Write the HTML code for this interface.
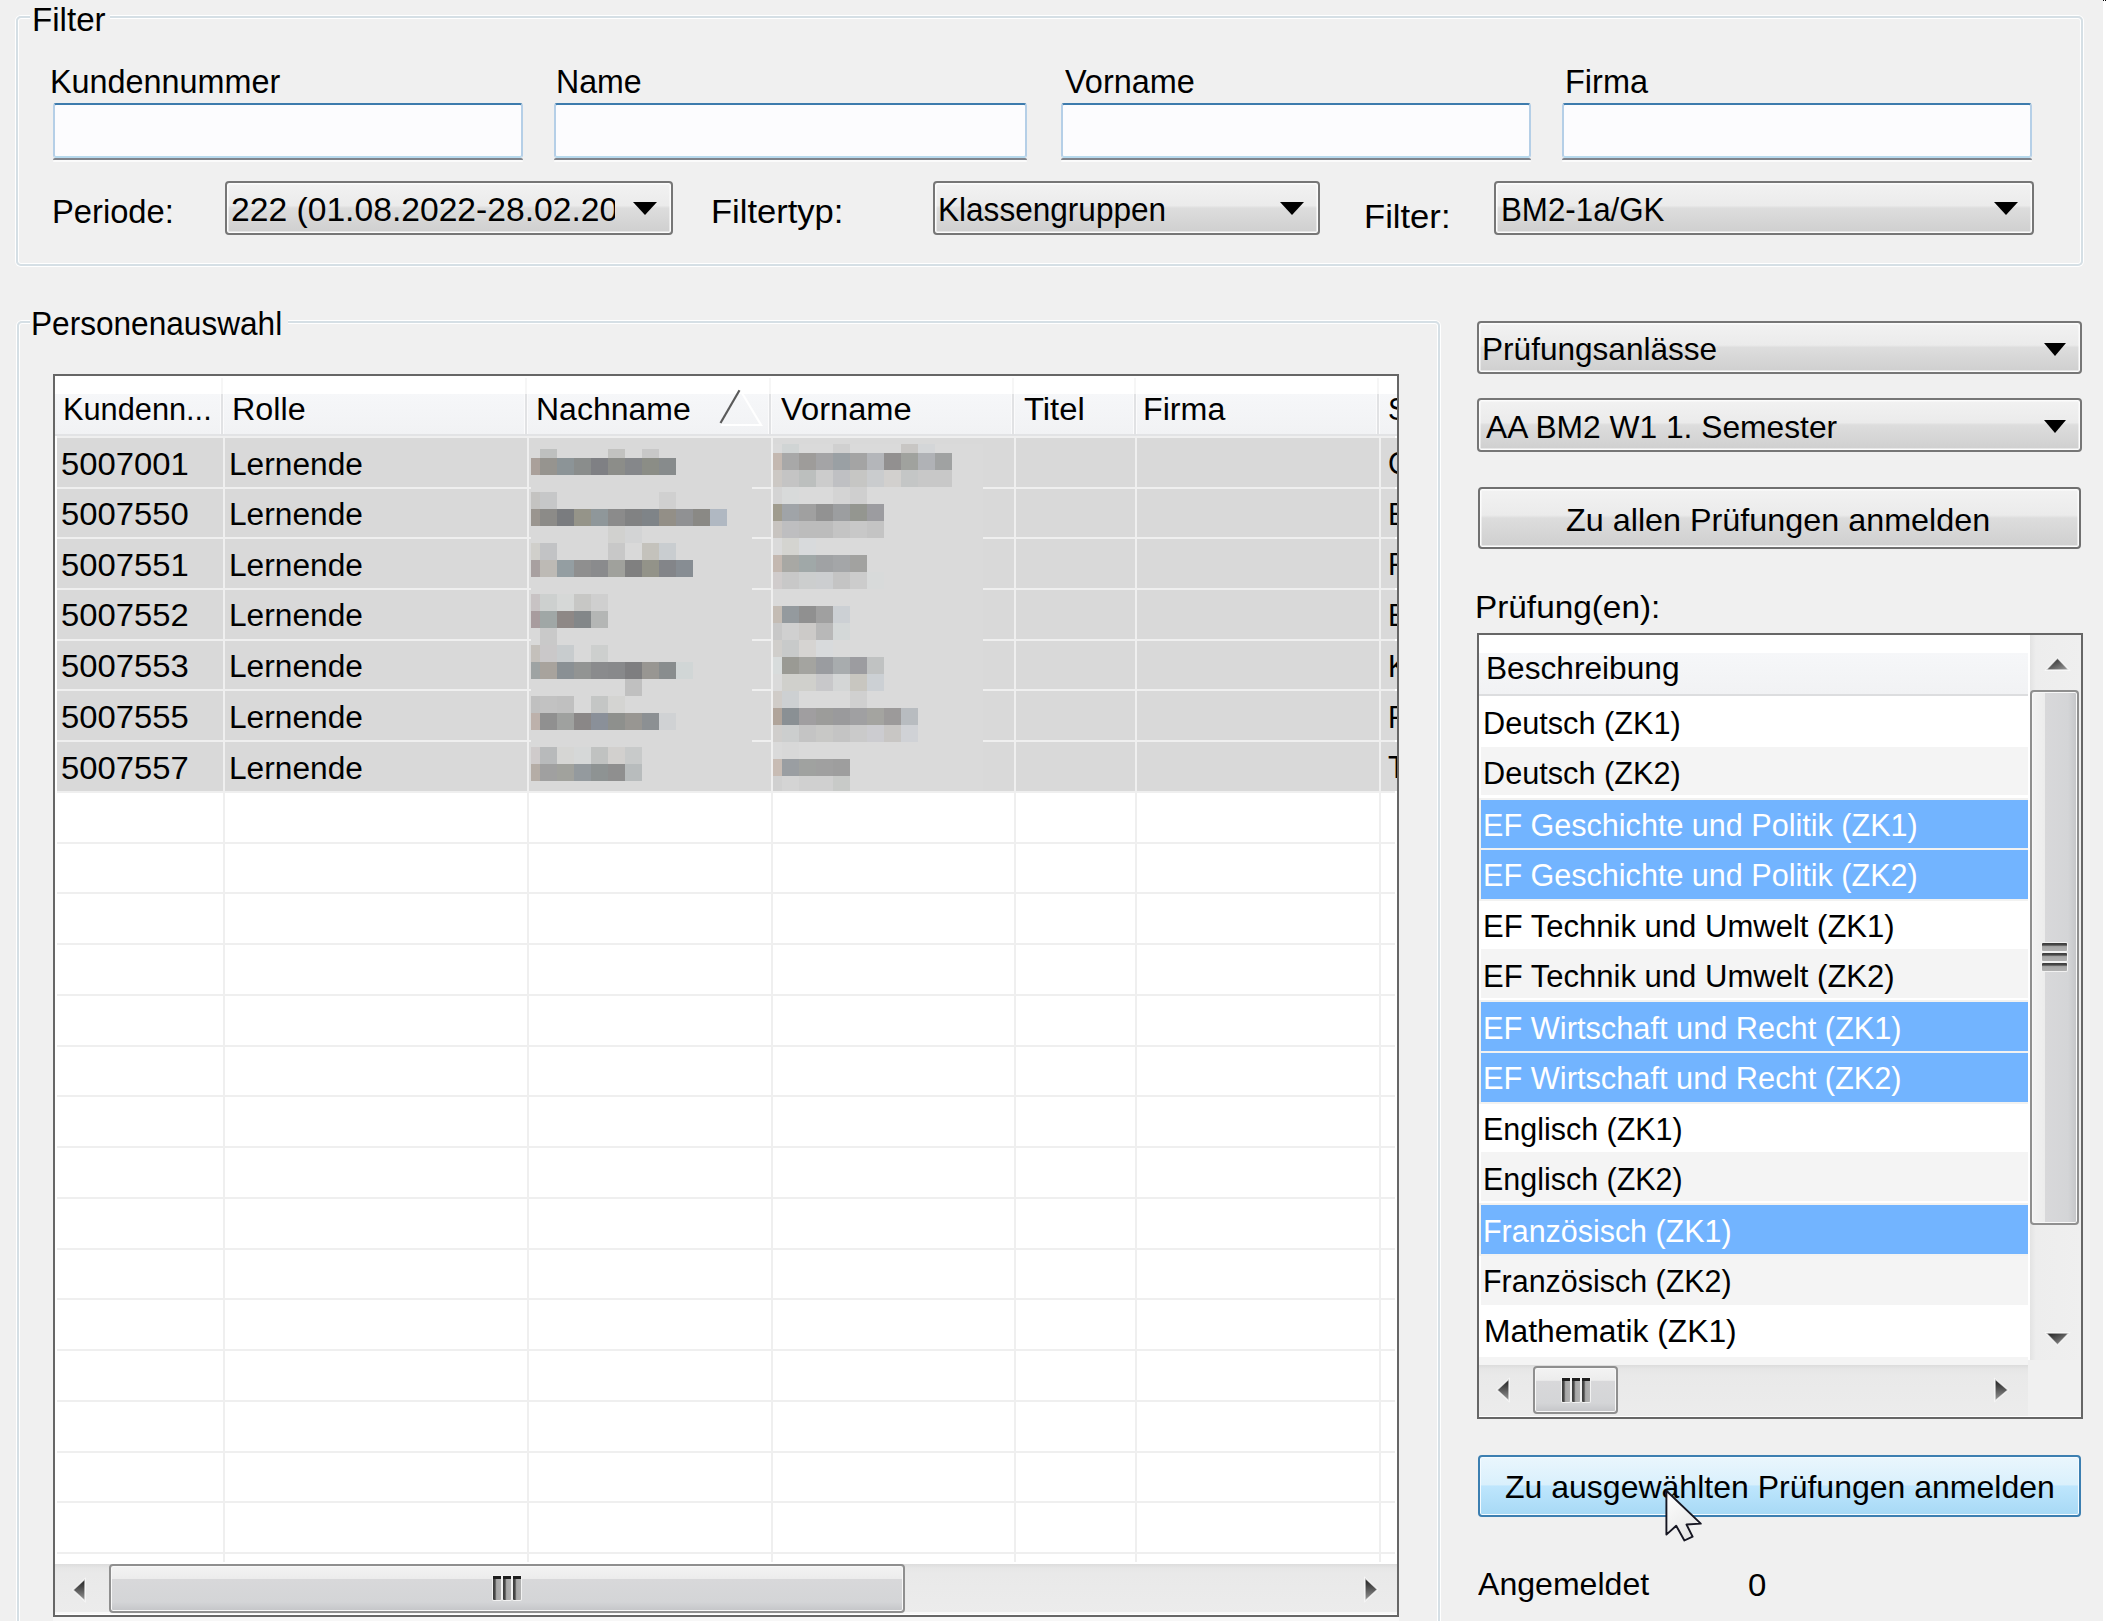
<!DOCTYPE html>
<html><head><meta charset="utf-8"><style>
html,body{margin:0;padding:0}
body{width:2106px;height:1621px;overflow:hidden;position:relative;background:#f0f0f0;font-family:"Liberation Sans",sans-serif;color:#000}
.a{position:absolute;box-sizing:border-box}
.t{position:absolute;white-space:nowrap;transform-origin:0 0}
.gb{position:absolute;box-sizing:border-box;border:2px solid #d5dfe5;border-radius:5px;box-shadow:inset 0 0 0 1px #fff, 0 0 0 1px #fff}
.tb{position:absolute;box-sizing:border-box;border:2px solid #abadb3;border-top-color:#3d7bad;border-left-color:#b5cfe7;border-right-color:#b5cfe7;border-bottom-color:#b7d9ed;background:#fcfcfe;border-radius:3px}
.tbb{position:absolute;height:2px;background:#80848c;border-radius:2px 2px 0 0;box-shadow:0 2px 0 #fbfbfb}
.cb{position:absolute;box-sizing:border-box;border:2px solid #767676;border-radius:4px;background:linear-gradient(#f2f2f2 0%,#ebebeb 45%,#dddddd 50%,#cfcfcf 100%);box-shadow:inset 0 0 0 1.5px #fcfcfc}
.arr{position:absolute;width:0;height:0;border-left:12px solid transparent;border-right:12px solid transparent;border-top:13px solid #000}
</style></head><body>
<div class="a" style="left:2103px;top:0;width:3px;height:1621px;background:#fff"></div>
<div class="a" style="left:2103px;top:0;width:1.3px;height:1.2px;background:#000"></div>
<div class="a" style="left:2105px;top:0;width:1px;height:1.2px;background:#000"></div>
<div class="gb" style="left:16px;top:16px;width:2067px;height:250px"></div>
<div class="a" style="left:30px;top:8px;width:80px;height:20px;background:#f0f0f0"></div>
<div class="t" style="left:32.15px;top:1.52px;font-size:34px;line-height:34px;transform:scaleX(0.9749);color:#000;">Filter</div>
<div class="t" style="left:50.21px;top:64.12px;font-size:34px;line-height:34px;transform:scaleX(0.9519);color:#000;">Kundennummer</div>
<div class="t" style="left:555.93px;top:64.32px;font-size:34px;line-height:34px;transform:scaleX(0.9448);color:#000;">Name</div>
<div class="t" style="left:1065.40px;top:64.32px;font-size:34px;line-height:34px;transform:scaleX(0.9545);color:#000;">Vorname</div>
<div class="t" style="left:1565.40px;top:64.32px;font-size:34px;line-height:34px;transform:scaleX(0.9554);color:#000;">Firma</div>
<div class="tb" style="left:53px;top:103px;width:470px;height:55px"></div>
<div class="tbb" style="left:53px;top:158px;width:470px"></div>
<div class="tb" style="left:554px;top:103px;width:473px;height:55px"></div>
<div class="tbb" style="left:554px;top:158px;width:473px"></div>
<div class="tb" style="left:1061px;top:103px;width:470px;height:55px"></div>
<div class="tbb" style="left:1061px;top:158px;width:470px"></div>
<div class="tb" style="left:1562px;top:103px;width:470px;height:55px"></div>
<div class="tbb" style="left:1562px;top:158px;width:470px"></div>
<div class="t" style="left:51.58px;top:194.42px;font-size:34px;line-height:34px;transform:scaleX(0.9622);color:#000;">Periode:</div>
<div class="cb" style="left:225px;top:181px;width:448px;height:54px"></div>
<div class="a" style="left:228px;top:185px;width:386.5px;height:46px;overflow:hidden">
<div class="t" style="left:3.11px;top:7.12px;font-size:34px;line-height:34px;transform:scaleX(0.9896);color:#000;">222 (01.08.2022-28.02.20</div>
</div>
<div class="arr" style="left:633px;top:202px"></div>
<div class="t" style="left:711.24px;top:194.22px;font-size:34px;line-height:34px;transform:scaleX(1.0157);color:#000;">Filtertyp:</div>
<div class="cb" style="left:933px;top:181px;width:387px;height:54px"></div>
<div class="t" style="left:938.48px;top:192.22px;font-size:34px;line-height:34px;transform:scaleX(0.9282);color:#000;">Klassengruppen</div>
<div class="arr" style="left:1280px;top:202px"></div>
<div class="t" style="left:1364.23px;top:199.22px;font-size:34px;line-height:34px;transform:scaleX(1.0175);color:#000;">Filter:</div>
<div class="cb" style="left:1494px;top:181px;width:540px;height:54px"></div>
<div class="t" style="left:1500.50px;top:192.02px;font-size:34px;line-height:34px;transform:scaleX(0.9203);color:#000;">BM2-1a/GK</div>
<div class="arr" style="left:1994px;top:202px"></div>
<div class="gb" style="left:17px;top:321px;width:1423px;height:1400px"></div>
<div class="a" style="left:30px;top:310px;width:258px;height:20px;background:#f0f0f0"></div>
<div class="t" style="left:31.27px;top:306.12px;font-size:34px;line-height:34px;transform:scaleX(0.9292);color:#000;">Personenauswahl</div>
<div class="a" style="left:53px;top:374px;width:1346px;height:1243px;border:2px solid #666;background:#fff"></div>
<div class="a" style="left:55px;top:394px;width:1342px;height:40px;background:linear-gradient(#f6f7f9,#f1f2f4)"></div>
<div class="a" style="left:55px;top:434px;width:1342px;height:2px;background:#e2e3e5"></div>
<div class="a" style="left:220px;top:394px;width:4px;height:40px;background:#fbfbfc"></div>
<div class="a" style="left:221px;top:394px;width:2px;height:42px;background:#e1e2e4"></div>
<div class="a" style="left:221px;top:378px;width:2px;height:16px;background:#f6f6f6"></div>
<div class="a" style="left:524px;top:394px;width:4px;height:40px;background:#fbfbfc"></div>
<div class="a" style="left:525px;top:394px;width:2px;height:42px;background:#e1e2e4"></div>
<div class="a" style="left:525px;top:378px;width:2px;height:16px;background:#f6f6f6"></div>
<div class="a" style="left:768px;top:394px;width:4px;height:40px;background:#fbfbfc"></div>
<div class="a" style="left:769px;top:394px;width:2px;height:42px;background:#e1e2e4"></div>
<div class="a" style="left:769px;top:378px;width:2px;height:16px;background:#f6f6f6"></div>
<div class="a" style="left:1011px;top:394px;width:4px;height:40px;background:#fbfbfc"></div>
<div class="a" style="left:1012px;top:394px;width:2px;height:42px;background:#e1e2e4"></div>
<div class="a" style="left:1012px;top:378px;width:2px;height:16px;background:#f6f6f6"></div>
<div class="a" style="left:1133px;top:394px;width:4px;height:40px;background:#fbfbfc"></div>
<div class="a" style="left:1134px;top:394px;width:2px;height:42px;background:#e1e2e4"></div>
<div class="a" style="left:1134px;top:378px;width:2px;height:16px;background:#f6f6f6"></div>
<div class="a" style="left:1376px;top:394px;width:4px;height:40px;background:#fbfbfc"></div>
<div class="a" style="left:1377px;top:394px;width:2px;height:42px;background:#e1e2e4"></div>
<div class="a" style="left:1377px;top:378px;width:2px;height:16px;background:#f6f6f6"></div>
<div class="a" style="left:57px;top:436px;width:1338px;height:2px;background:#efefef"></div>
<div class="a" style="left:57px;top:487px;width:1338px;height:2px;background:#efefef"></div>
<div class="a" style="left:57px;top:537px;width:1338px;height:2px;background:#efefef"></div>
<div class="a" style="left:57px;top:588px;width:1338px;height:2px;background:#efefef"></div>
<div class="a" style="left:57px;top:639px;width:1338px;height:2px;background:#efefef"></div>
<div class="a" style="left:57px;top:689px;width:1338px;height:2px;background:#efefef"></div>
<div class="a" style="left:57px;top:740px;width:1338px;height:2px;background:#efefef"></div>
<div class="a" style="left:57px;top:791px;width:1338px;height:2px;background:#efefef"></div>
<div class="a" style="left:57px;top:842px;width:1338px;height:2px;background:#efefef"></div>
<div class="a" style="left:57px;top:892px;width:1338px;height:2px;background:#efefef"></div>
<div class="a" style="left:57px;top:943px;width:1338px;height:2px;background:#efefef"></div>
<div class="a" style="left:57px;top:994px;width:1338px;height:2px;background:#efefef"></div>
<div class="a" style="left:57px;top:1045px;width:1338px;height:2px;background:#efefef"></div>
<div class="a" style="left:57px;top:1095px;width:1338px;height:2px;background:#efefef"></div>
<div class="a" style="left:57px;top:1146px;width:1338px;height:2px;background:#efefef"></div>
<div class="a" style="left:57px;top:1197px;width:1338px;height:2px;background:#efefef"></div>
<div class="a" style="left:57px;top:1248px;width:1338px;height:2px;background:#efefef"></div>
<div class="a" style="left:57px;top:1298px;width:1338px;height:2px;background:#efefef"></div>
<div class="a" style="left:57px;top:1349px;width:1338px;height:2px;background:#efefef"></div>
<div class="a" style="left:57px;top:1400px;width:1338px;height:2px;background:#efefef"></div>
<div class="a" style="left:57px;top:1451px;width:1338px;height:2px;background:#efefef"></div>
<div class="a" style="left:57px;top:1501px;width:1338px;height:2px;background:#efefef"></div>
<div class="a" style="left:57px;top:1552px;width:1338px;height:2px;background:#efefef"></div>
<div class="a" style="left:223px;top:436px;width:2px;height:1126px;background:#efefef"></div>
<div class="a" style="left:527px;top:436px;width:2px;height:1126px;background:#efefef"></div>
<div class="a" style="left:771px;top:436px;width:2px;height:1126px;background:#efefef"></div>
<div class="a" style="left:1014px;top:436px;width:2px;height:1126px;background:#efefef"></div>
<div class="a" style="left:1135px;top:436px;width:2px;height:1126px;background:#efefef"></div>
<div class="a" style="left:1379px;top:436px;width:2px;height:1126px;background:#efefef"></div>
<div class="a" style="left:57px;top:438px;width:166px;height:49px;background:#d9d9d9"></div>
<div class="a" style="left:225px;top:438px;width:302px;height:49px;background:#d9d9d9"></div>
<div class="a" style="left:529px;top:438px;width:242px;height:49px;background:#d9d9d9"></div>
<div class="a" style="left:773px;top:438px;width:241px;height:49px;background:#d9d9d9"></div>
<div class="a" style="left:1016px;top:438px;width:119px;height:49px;background:#d9d9d9"></div>
<div class="a" style="left:1137px;top:438px;width:242px;height:49px;background:#d9d9d9"></div>
<div class="a" style="left:1381px;top:438px;width:16px;height:49px;background:#d9d9d9"></div>
<div class="a" style="left:57px;top:489px;width:166px;height:48px;background:#d9d9d9"></div>
<div class="a" style="left:225px;top:489px;width:302px;height:48px;background:#d9d9d9"></div>
<div class="a" style="left:529px;top:489px;width:242px;height:48px;background:#d9d9d9"></div>
<div class="a" style="left:773px;top:489px;width:241px;height:48px;background:#d9d9d9"></div>
<div class="a" style="left:1016px;top:489px;width:119px;height:48px;background:#d9d9d9"></div>
<div class="a" style="left:1137px;top:489px;width:242px;height:48px;background:#d9d9d9"></div>
<div class="a" style="left:1381px;top:489px;width:16px;height:48px;background:#d9d9d9"></div>
<div class="a" style="left:57px;top:539px;width:166px;height:49px;background:#d9d9d9"></div>
<div class="a" style="left:225px;top:539px;width:302px;height:49px;background:#d9d9d9"></div>
<div class="a" style="left:529px;top:539px;width:242px;height:49px;background:#d9d9d9"></div>
<div class="a" style="left:773px;top:539px;width:241px;height:49px;background:#d9d9d9"></div>
<div class="a" style="left:1016px;top:539px;width:119px;height:49px;background:#d9d9d9"></div>
<div class="a" style="left:1137px;top:539px;width:242px;height:49px;background:#d9d9d9"></div>
<div class="a" style="left:1381px;top:539px;width:16px;height:49px;background:#d9d9d9"></div>
<div class="a" style="left:57px;top:590px;width:166px;height:49px;background:#d9d9d9"></div>
<div class="a" style="left:225px;top:590px;width:302px;height:49px;background:#d9d9d9"></div>
<div class="a" style="left:529px;top:590px;width:242px;height:49px;background:#d9d9d9"></div>
<div class="a" style="left:773px;top:590px;width:241px;height:49px;background:#d9d9d9"></div>
<div class="a" style="left:1016px;top:590px;width:119px;height:49px;background:#d9d9d9"></div>
<div class="a" style="left:1137px;top:590px;width:242px;height:49px;background:#d9d9d9"></div>
<div class="a" style="left:1381px;top:590px;width:16px;height:49px;background:#d9d9d9"></div>
<div class="a" style="left:57px;top:641px;width:166px;height:48px;background:#d9d9d9"></div>
<div class="a" style="left:225px;top:641px;width:302px;height:48px;background:#d9d9d9"></div>
<div class="a" style="left:529px;top:641px;width:242px;height:48px;background:#d9d9d9"></div>
<div class="a" style="left:773px;top:641px;width:241px;height:48px;background:#d9d9d9"></div>
<div class="a" style="left:1016px;top:641px;width:119px;height:48px;background:#d9d9d9"></div>
<div class="a" style="left:1137px;top:641px;width:242px;height:48px;background:#d9d9d9"></div>
<div class="a" style="left:1381px;top:641px;width:16px;height:48px;background:#d9d9d9"></div>
<div class="a" style="left:57px;top:691px;width:166px;height:49px;background:#d9d9d9"></div>
<div class="a" style="left:225px;top:691px;width:302px;height:49px;background:#d9d9d9"></div>
<div class="a" style="left:529px;top:691px;width:242px;height:49px;background:#d9d9d9"></div>
<div class="a" style="left:773px;top:691px;width:241px;height:49px;background:#d9d9d9"></div>
<div class="a" style="left:1016px;top:691px;width:119px;height:49px;background:#d9d9d9"></div>
<div class="a" style="left:1137px;top:691px;width:242px;height:49px;background:#d9d9d9"></div>
<div class="a" style="left:1381px;top:691px;width:16px;height:49px;background:#d9d9d9"></div>
<div class="a" style="left:57px;top:742px;width:166px;height:49px;background:#d9d9d9"></div>
<div class="a" style="left:225px;top:742px;width:302px;height:49px;background:#d9d9d9"></div>
<div class="a" style="left:529px;top:742px;width:242px;height:49px;background:#d9d9d9"></div>
<div class="a" style="left:773px;top:742px;width:241px;height:49px;background:#d9d9d9"></div>
<div class="a" style="left:1016px;top:742px;width:119px;height:49px;background:#d9d9d9"></div>
<div class="a" style="left:1137px;top:742px;width:242px;height:49px;background:#d9d9d9"></div>
<div class="a" style="left:1381px;top:742px;width:16px;height:49px;background:#d9d9d9"></div>
<div class="t" style="left:63.44px;top:393.86px;font-size:31px;line-height:31px;transform:scaleX(0.9916);color:#000;">Kundenn...</div>
<div class="t" style="left:231.91px;top:393.86px;font-size:31px;line-height:31px;transform:scaleX(1.0428);color:#000;">Rolle</div>
<div class="t" style="left:535.84px;top:393.86px;font-size:31px;line-height:31px;transform:scaleX(1.0317);color:#000;">Nachname</div>
<div class="t" style="left:781.29px;top:393.86px;font-size:31px;line-height:31px;transform:scaleX(1.0533);color:#000;">Vorname</div>
<div class="t" style="left:1023.58px;top:393.86px;font-size:31px;line-height:31px;transform:scaleX(1.0574);color:#000;">Titel</div>
<div class="t" style="left:1143.22px;top:393.86px;font-size:31px;line-height:31px;transform:scaleX(1.0389);color:#000;">Firma</div>
<div class="a" style="left:1379px;top:378px;width:18px;height:56px;overflow:hidden">
<div class="t" style="left:9.34px;top:15.56px;font-size:31px;line-height:31px;transform:scaleX(0.9500);color:#000;">S</div>
</div>
<svg class="a" style="left:715px;top:386px" width="50" height="42"><path d="M25.5 4.5 L46 39 L6 39" stroke="#fff" stroke-width="2.2" fill="none"/><path d="M5.5 37 L24.5 4.2" stroke="#5a5a5a" stroke-width="2.2" fill="none"/></svg>
<div class="t" style="left:60.78px;top:448.56px;font-size:31px;line-height:31px;transform:scaleX(1.0575);color:#000;">5007001</div>
<div class="t" style="left:228.97px;top:448.56px;font-size:31px;line-height:31px;transform:scaleX(1.0218);color:#000;">Lernende</div>
<div class="a" style="left:1382px;top:438px;width:15px;height:48px;overflow:hidden">
<div class="t" style="left:6.34px;top:10.16px;font-size:31px;line-height:31px;transform:scaleX(0.9500);color:#000;">C</div>
</div>
<div class="t" style="left:60.78px;top:499.03px;font-size:31px;line-height:31px;transform:scaleX(1.0575);color:#000;">5007550</div>
<div class="t" style="left:228.97px;top:499.03px;font-size:31px;line-height:31px;transform:scaleX(1.0218);color:#000;">Lernende</div>
<div class="a" style="left:1382px;top:489px;width:15px;height:48px;overflow:hidden">
<div class="t" style="left:6.34px;top:10.16px;font-size:31px;line-height:31px;transform:scaleX(0.9500);color:#000;">B</div>
</div>
<div class="t" style="left:60.78px;top:549.51px;font-size:31px;line-height:31px;transform:scaleX(1.0575);color:#000;">5007551</div>
<div class="t" style="left:228.97px;top:549.51px;font-size:31px;line-height:31px;transform:scaleX(1.0218);color:#000;">Lernende</div>
<div class="a" style="left:1382px;top:539px;width:15px;height:48px;overflow:hidden">
<div class="t" style="left:6.34px;top:10.16px;font-size:31px;line-height:31px;transform:scaleX(0.9500);color:#000;">R</div>
</div>
<div class="t" style="left:60.78px;top:600.48px;font-size:31px;line-height:31px;transform:scaleX(1.0575);color:#000;">5007552</div>
<div class="t" style="left:228.97px;top:600.48px;font-size:31px;line-height:31px;transform:scaleX(1.0218);color:#000;">Lernende</div>
<div class="a" style="left:1382px;top:590px;width:15px;height:48px;overflow:hidden">
<div class="t" style="left:6.34px;top:10.16px;font-size:31px;line-height:31px;transform:scaleX(0.9500);color:#000;">B</div>
</div>
<div class="t" style="left:60.78px;top:651.46px;font-size:31px;line-height:31px;transform:scaleX(1.0575);color:#000;">5007553</div>
<div class="t" style="left:228.97px;top:651.46px;font-size:31px;line-height:31px;transform:scaleX(1.0218);color:#000;">Lernende</div>
<div class="a" style="left:1382px;top:641px;width:15px;height:48px;overflow:hidden">
<div class="t" style="left:6.34px;top:10.16px;font-size:31px;line-height:31px;transform:scaleX(0.9500);color:#000;">K</div>
</div>
<div class="t" style="left:60.78px;top:701.93px;font-size:31px;line-height:31px;transform:scaleX(1.0575);color:#000;">5007555</div>
<div class="t" style="left:228.97px;top:701.93px;font-size:31px;line-height:31px;transform:scaleX(1.0218);color:#000;">Lernende</div>
<div class="a" style="left:1382px;top:692px;width:15px;height:48px;overflow:hidden">
<div class="t" style="left:6.34px;top:10.16px;font-size:31px;line-height:31px;transform:scaleX(0.9500);color:#000;">R</div>
</div>
<div class="t" style="left:60.78px;top:752.91px;font-size:31px;line-height:31px;transform:scaleX(1.0575);color:#000;">5007557</div>
<div class="t" style="left:228.97px;top:752.91px;font-size:31px;line-height:31px;transform:scaleX(1.0218);color:#000;">Lernende</div>
<div class="a" style="left:1382px;top:742px;width:15px;height:48px;overflow:hidden">
<div class="t" style="left:6.34px;top:10.16px;font-size:31px;line-height:31px;transform:scaleX(0.9500);color:#000;">T</div>
</div>
<div class="a" style="left:531px;top:449px;width:221px;height:342px;background:#d9d9d9"></div>
<div class="a" style="left:773px;top:444px;width:210px;height:347px;background:#dadada"></div>
<div class="a" style="left:540px;top:449px;width:17px;height:9px;background:#bec0bf"></div>
<div class="a" style="left:608px;top:449px;width:17px;height:9px;background:#c2c2c0"></div>
<div class="a" style="left:642px;top:449px;width:17px;height:9px;background:#c8c8c8"></div>
<div class="a" style="left:531px;top:458px;width:9px;height:17px;background:#aaa09a"></div>
<div class="a" style="left:540px;top:458px;width:17px;height:17px;background:#96948f"></div>
<div class="a" style="left:557px;top:458px;width:17px;height:17px;background:#8c9497"></div>
<div class="a" style="left:574px;top:458px;width:17px;height:17px;background:#8a8d8c"></div>
<div class="a" style="left:591px;top:458px;width:17px;height:17px;background:#7f8084"></div>
<div class="a" style="left:608px;top:458px;width:17px;height:17px;background:#8c8d89"></div>
<div class="a" style="left:625px;top:458px;width:17px;height:17px;background:#85878a"></div>
<div class="a" style="left:642px;top:458px;width:17px;height:17px;background:#8b8d86"></div>
<div class="a" style="left:659px;top:458px;width:17px;height:17px;background:#878b8c"></div>
<div class="a" style="left:531px;top:492px;width:9px;height:17px;background:#c4c3c1"></div>
<div class="a" style="left:540px;top:492px;width:17px;height:17px;background:#c6c7c8"></div>
<div class="a" style="left:659px;top:492px;width:17px;height:17px;background:#d0d0d0"></div>
<div class="a" style="left:531px;top:509px;width:9px;height:17px;background:#9a958f"></div>
<div class="a" style="left:540px;top:509px;width:17px;height:17px;background:#8c8b88"></div>
<div class="a" style="left:557px;top:509px;width:17px;height:17px;background:#7a7c7f"></div>
<div class="a" style="left:574px;top:509px;width:17px;height:17px;background:#959489"></div>
<div class="a" style="left:591px;top:509px;width:17px;height:17px;background:#8f979a"></div>
<div class="a" style="left:608px;top:509px;width:17px;height:17px;background:#8b8b8b"></div>
<div class="a" style="left:625px;top:509px;width:17px;height:17px;background:#818283"></div>
<div class="a" style="left:642px;top:509px;width:17px;height:17px;background:#7f8488"></div>
<div class="a" style="left:659px;top:509px;width:17px;height:17px;background:#938f87"></div>
<div class="a" style="left:676px;top:509px;width:17px;height:17px;background:#909193"></div>
<div class="a" style="left:693px;top:509px;width:17px;height:17px;background:#8a8985"></div>
<div class="a" style="left:710px;top:509px;width:17px;height:17px;background:#b0b8c2"></div>
<div class="a" style="left:608px;top:526px;width:17px;height:17px;background:#d1d1cf"></div>
<div class="a" style="left:625px;top:526px;width:17px;height:17px;background:#d3d4d5"></div>
<div class="a" style="left:531px;top:543px;width:9px;height:17px;background:#d0cfcb"></div>
<div class="a" style="left:540px;top:543px;width:17px;height:17px;background:#c2c3c5"></div>
<div class="a" style="left:608px;top:543px;width:17px;height:17px;background:#c8c8c8"></div>
<div class="a" style="left:642px;top:543px;width:17px;height:17px;background:#c4c2bc"></div>
<div class="a" style="left:659px;top:543px;width:17px;height:17px;background:#c9cdd0"></div>
<div class="a" style="left:531px;top:560px;width:9px;height:17px;background:#a8a0a0"></div>
<div class="a" style="left:540px;top:560px;width:17px;height:17px;background:#bdbab5"></div>
<div class="a" style="left:557px;top:560px;width:17px;height:17px;background:#949ea2"></div>
<div class="a" style="left:574px;top:560px;width:17px;height:17px;background:#8f8f8f"></div>
<div class="a" style="left:591px;top:560px;width:17px;height:17px;background:#8a8b8d"></div>
<div class="a" style="left:608px;top:560px;width:17px;height:17px;background:#a0a19c"></div>
<div class="a" style="left:625px;top:560px;width:17px;height:17px;background:#808080"></div>
<div class="a" style="left:642px;top:560px;width:17px;height:17px;background:#939389"></div>
<div class="a" style="left:659px;top:560px;width:17px;height:17px;background:#838589"></div>
<div class="a" style="left:676px;top:560px;width:17px;height:17px;background:#878d93"></div>
<div class="a" style="left:531px;top:594px;width:9px;height:17px;background:#c8c3c4"></div>
<div class="a" style="left:540px;top:594px;width:17px;height:17px;background:#cdd0cf"></div>
<div class="a" style="left:557px;top:594px;width:17px;height:17px;background:#d6d8d7"></div>
<div class="a" style="left:574px;top:594px;width:17px;height:17px;background:#c7c7c5"></div>
<div class="a" style="left:591px;top:594px;width:17px;height:17px;background:#cfcfcf"></div>
<div class="a" style="left:531px;top:611px;width:9px;height:17px;background:#a89c9e"></div>
<div class="a" style="left:540px;top:611px;width:17px;height:17px;background:#a0a7a6"></div>
<div class="a" style="left:557px;top:611px;width:17px;height:17px;background:#8e8886"></div>
<div class="a" style="left:574px;top:611px;width:17px;height:17px;background:#838789"></div>
<div class="a" style="left:591px;top:611px;width:17px;height:17px;background:#b4b6b5"></div>
<div class="a" style="left:540px;top:628px;width:17px;height:17px;background:#c9c9c9"></div>
<div class="a" style="left:531px;top:645px;width:9px;height:17px;background:#c4c0bb"></div>
<div class="a" style="left:540px;top:645px;width:17px;height:17px;background:#cac8c9"></div>
<div class="a" style="left:557px;top:645px;width:17px;height:17px;background:#c8ccce"></div>
<div class="a" style="left:591px;top:645px;width:17px;height:17px;background:#cdcfce"></div>
<div class="a" style="left:531px;top:662px;width:9px;height:17px;background:#9ea3a3"></div>
<div class="a" style="left:540px;top:662px;width:17px;height:17px;background:#a8a39d"></div>
<div class="a" style="left:557px;top:662px;width:17px;height:17px;background:#8a9094"></div>
<div class="a" style="left:574px;top:662px;width:17px;height:17px;background:#929493"></div>
<div class="a" style="left:591px;top:662px;width:17px;height:17px;background:#8a8b8d"></div>
<div class="a" style="left:608px;top:662px;width:17px;height:17px;background:#88898b"></div>
<div class="a" style="left:625px;top:662px;width:17px;height:17px;background:#7e7e80"></div>
<div class="a" style="left:642px;top:662px;width:17px;height:17px;background:#989692"></div>
<div class="a" style="left:659px;top:662px;width:17px;height:17px;background:#898d8e"></div>
<div class="a" style="left:676px;top:662px;width:17px;height:17px;background:#d1d6d6"></div>
<div class="a" style="left:625px;top:679px;width:17px;height:17px;background:#c0c0c0"></div>
<div class="a" style="left:531px;top:696px;width:9px;height:17px;background:#c0c0c0"></div>
<div class="a" style="left:540px;top:696px;width:17px;height:17px;background:#c2c2c2"></div>
<div class="a" style="left:557px;top:696px;width:17px;height:17px;background:#c0c0c0"></div>
<div class="a" style="left:591px;top:696px;width:17px;height:17px;background:#c4c6c5"></div>
<div class="a" style="left:608px;top:696px;width:17px;height:17px;background:#d4d4d2"></div>
<div class="a" style="left:531px;top:713px;width:9px;height:17px;background:#bdb1ab"></div>
<div class="a" style="left:540px;top:713px;width:17px;height:17px;background:#909090"></div>
<div class="a" style="left:557px;top:713px;width:17px;height:17px;background:#9fa19f"></div>
<div class="a" style="left:574px;top:713px;width:17px;height:17px;background:#8a8787"></div>
<div class="a" style="left:591px;top:713px;width:17px;height:17px;background:#8a9099"></div>
<div class="a" style="left:608px;top:713px;width:17px;height:17px;background:#8e908d"></div>
<div class="a" style="left:625px;top:713px;width:17px;height:17px;background:#989692"></div>
<div class="a" style="left:642px;top:713px;width:17px;height:17px;background:#8c9093"></div>
<div class="a" style="left:659px;top:713px;width:17px;height:17px;background:#d0d2d4"></div>
<div class="a" style="left:531px;top:747px;width:9px;height:17px;background:#cfcbcb"></div>
<div class="a" style="left:540px;top:747px;width:17px;height:17px;background:#b8babb"></div>
<div class="a" style="left:557px;top:747px;width:17px;height:17px;background:#d6d6d4"></div>
<div class="a" style="left:574px;top:747px;width:17px;height:17px;background:#d6d8d8"></div>
<div class="a" style="left:591px;top:747px;width:17px;height:17px;background:#c0c2c1"></div>
<div class="a" style="left:608px;top:747px;width:17px;height:17px;background:#d2d0ce"></div>
<div class="a" style="left:625px;top:747px;width:17px;height:17px;background:#c8caca"></div>
<div class="a" style="left:531px;top:764px;width:9px;height:17px;background:#b5ada6"></div>
<div class="a" style="left:540px;top:764px;width:17px;height:17px;background:#a0a0a0"></div>
<div class="a" style="left:557px;top:764px;width:17px;height:17px;background:#a1a29d"></div>
<div class="a" style="left:574px;top:764px;width:17px;height:17px;background:#949a9e"></div>
<div class="a" style="left:591px;top:764px;width:17px;height:17px;background:#8e9393"></div>
<div class="a" style="left:608px;top:764px;width:17px;height:17px;background:#8f8f8f"></div>
<div class="a" style="left:625px;top:764px;width:17px;height:17px;background:#b8bcbd"></div>
<div class="a" style="left:782px;top:444px;width:17px;height:9px;background:#d0d4d4"></div>
<div class="a" style="left:833px;top:444px;width:17px;height:9px;background:#d0d0d0"></div>
<div class="a" style="left:901px;top:444px;width:17px;height:9px;background:#c8c6c4"></div>
<div class="a" style="left:918px;top:444px;width:17px;height:9px;background:#d4d6d8"></div>
<div class="a" style="left:773px;top:453px;width:9px;height:17px;background:#c4b8b0"></div>
<div class="a" style="left:782px;top:453px;width:17px;height:17px;background:#a8a8a8"></div>
<div class="a" style="left:799px;top:453px;width:17px;height:17px;background:#9e9c9a"></div>
<div class="a" style="left:816px;top:453px;width:17px;height:17px;background:#a4a4a6"></div>
<div class="a" style="left:833px;top:453px;width:17px;height:17px;background:#9aa0a4"></div>
<div class="a" style="left:850px;top:453px;width:17px;height:17px;background:#a4a4a4"></div>
<div class="a" style="left:867px;top:453px;width:17px;height:17px;background:#b4b6ba"></div>
<div class="a" style="left:884px;top:453px;width:17px;height:17px;background:#929090"></div>
<div class="a" style="left:901px;top:453px;width:17px;height:17px;background:#a0a29e"></div>
<div class="a" style="left:918px;top:453px;width:17px;height:17px;background:#b0b2b6"></div>
<div class="a" style="left:935px;top:453px;width:17px;height:17px;background:#a0a2a2"></div>
<div class="a" style="left:773px;top:470px;width:9px;height:17px;background:#ccc8c4"></div>
<div class="a" style="left:782px;top:470px;width:17px;height:17px;background:#c4c4c4"></div>
<div class="a" style="left:799px;top:470px;width:17px;height:17px;background:#bcbfbe"></div>
<div class="a" style="left:816px;top:470px;width:17px;height:17px;background:#cccccc"></div>
<div class="a" style="left:833px;top:470px;width:17px;height:17px;background:#bfc0c3"></div>
<div class="a" style="left:850px;top:470px;width:17px;height:17px;background:#c6c6c4"></div>
<div class="a" style="left:867px;top:470px;width:17px;height:17px;background:#caccce"></div>
<div class="a" style="left:884px;top:470px;width:17px;height:17px;background:#d2d0ce"></div>
<div class="a" style="left:901px;top:470px;width:17px;height:17px;background:#c4c6c6"></div>
<div class="a" style="left:918px;top:470px;width:17px;height:17px;background:#c8c8c8"></div>
<div class="a" style="left:935px;top:470px;width:17px;height:17px;background:#c8c8c8"></div>
<div class="a" style="left:773px;top:487px;width:9px;height:17px;background:#d4d4d4"></div>
<div class="a" style="left:782px;top:487px;width:17px;height:17px;background:#d8dada"></div>
<div class="a" style="left:833px;top:487px;width:17px;height:17px;background:#d4d4d4"></div>
<div class="a" style="left:850px;top:487px;width:17px;height:17px;background:#cfcfcf"></div>
<div class="a" style="left:773px;top:504px;width:9px;height:17px;background:#a09c8e"></div>
<div class="a" style="left:782px;top:504px;width:17px;height:17px;background:#a0a4a8"></div>
<div class="a" style="left:799px;top:504px;width:17px;height:17px;background:#a0a0a0"></div>
<div class="a" style="left:816px;top:504px;width:17px;height:17px;background:#929292"></div>
<div class="a" style="left:833px;top:504px;width:17px;height:17px;background:#9c9ea0"></div>
<div class="a" style="left:850px;top:504px;width:17px;height:17px;background:#949690"></div>
<div class="a" style="left:867px;top:504px;width:17px;height:17px;background:#9c9ca0"></div>
<div class="a" style="left:773px;top:521px;width:9px;height:17px;background:#c8c4c0"></div>
<div class="a" style="left:782px;top:521px;width:17px;height:17px;background:#bebec0"></div>
<div class="a" style="left:799px;top:521px;width:17px;height:17px;background:#bcbcbc"></div>
<div class="a" style="left:816px;top:521px;width:17px;height:17px;background:#bcbcbc"></div>
<div class="a" style="left:833px;top:521px;width:17px;height:17px;background:#c4c4c4"></div>
<div class="a" style="left:850px;top:521px;width:17px;height:17px;background:#c8c8c8"></div>
<div class="a" style="left:867px;top:521px;width:17px;height:17px;background:#c4c4c4"></div>
<div class="a" style="left:782px;top:538px;width:17px;height:17px;background:#d4d4d0"></div>
<div class="a" style="left:799px;top:538px;width:17px;height:17px;background:#d8dadc"></div>
<div class="a" style="left:773px;top:555px;width:9px;height:17px;background:#c4b8b0"></div>
<div class="a" style="left:782px;top:555px;width:17px;height:17px;background:#a8a8a4"></div>
<div class="a" style="left:799px;top:555px;width:17px;height:17px;background:#a0a8a8"></div>
<div class="a" style="left:816px;top:555px;width:17px;height:17px;background:#a0a2a4"></div>
<div class="a" style="left:833px;top:555px;width:17px;height:17px;background:#a4a6a8"></div>
<div class="a" style="left:850px;top:555px;width:17px;height:17px;background:#a2a2a0"></div>
<div class="a" style="left:773px;top:572px;width:9px;height:17px;background:#d0cccc"></div>
<div class="a" style="left:782px;top:572px;width:17px;height:17px;background:#c8c8c8"></div>
<div class="a" style="left:799px;top:572px;width:17px;height:17px;background:#cccece"></div>
<div class="a" style="left:816px;top:572px;width:17px;height:17px;background:#ccced0"></div>
<div class="a" style="left:833px;top:572px;width:17px;height:17px;background:#c4c4c4"></div>
<div class="a" style="left:850px;top:572px;width:17px;height:17px;background:#cccccc"></div>
<div class="a" style="left:867px;top:572px;width:17px;height:17px;background:#d8dada"></div>
<div class="a" style="left:773px;top:606px;width:9px;height:17px;background:#c4bcb4"></div>
<div class="a" style="left:782px;top:606px;width:17px;height:17px;background:#949a9e"></div>
<div class="a" style="left:799px;top:606px;width:17px;height:17px;background:#909090"></div>
<div class="a" style="left:816px;top:606px;width:17px;height:17px;background:#a0a0a0"></div>
<div class="a" style="left:833px;top:606px;width:17px;height:17px;background:#ccd0d4"></div>
<div class="a" style="left:773px;top:623px;width:9px;height:17px;background:#c8c8c8"></div>
<div class="a" style="left:782px;top:623px;width:17px;height:17px;background:#d0d0d0"></div>
<div class="a" style="left:799px;top:623px;width:17px;height:17px;background:#cccac8"></div>
<div class="a" style="left:816px;top:623px;width:17px;height:17px;background:#b8b8b8"></div>
<div class="a" style="left:833px;top:623px;width:17px;height:17px;background:#d4d8d8"></div>
<div class="a" style="left:773px;top:640px;width:9px;height:17px;background:#d0cecb"></div>
<div class="a" style="left:782px;top:640px;width:17px;height:17px;background:#c8caca"></div>
<div class="a" style="left:799px;top:640px;width:17px;height:17px;background:#d6d4d2"></div>
<div class="a" style="left:816px;top:640px;width:17px;height:17px;background:#d8dadc"></div>
<div class="a" style="left:773px;top:657px;width:9px;height:17px;background:#d8dcdc"></div>
<div class="a" style="left:782px;top:657px;width:17px;height:17px;background:#9a9a94"></div>
<div class="a" style="left:799px;top:657px;width:17px;height:17px;background:#a4a4a0"></div>
<div class="a" style="left:816px;top:657px;width:17px;height:17px;background:#9a9ca0"></div>
<div class="a" style="left:833px;top:657px;width:17px;height:17px;background:#a8acae"></div>
<div class="a" style="left:850px;top:657px;width:17px;height:17px;background:#9c9ca0"></div>
<div class="a" style="left:867px;top:657px;width:17px;height:17px;background:#c0c2c2"></div>
<div class="a" style="left:782px;top:674px;width:17px;height:17px;background:#d0d0cc"></div>
<div class="a" style="left:799px;top:674px;width:17px;height:17px;background:#d0d0cc"></div>
<div class="a" style="left:816px;top:674px;width:17px;height:17px;background:#c8c8ca"></div>
<div class="a" style="left:833px;top:674px;width:17px;height:17px;background:#d4d6d6"></div>
<div class="a" style="left:850px;top:674px;width:17px;height:17px;background:#c8c6c0"></div>
<div class="a" style="left:867px;top:674px;width:17px;height:17px;background:#ccd0d4"></div>
<div class="a" style="left:773px;top:691px;width:9px;height:17px;background:#d0ccc8"></div>
<div class="a" style="left:782px;top:691px;width:17px;height:17px;background:#cdd0d2"></div>
<div class="a" style="left:850px;top:691px;width:17px;height:17px;background:#d0d0d0"></div>
<div class="a" style="left:773px;top:708px;width:9px;height:17px;background:#b0a49a"></div>
<div class="a" style="left:782px;top:708px;width:17px;height:17px;background:#8a9094"></div>
<div class="a" style="left:799px;top:708px;width:17px;height:17px;background:#a09ea0"></div>
<div class="a" style="left:816px;top:708px;width:17px;height:17px;background:#9c9c9a"></div>
<div class="a" style="left:833px;top:708px;width:17px;height:17px;background:#9a9a9c"></div>
<div class="a" style="left:850px;top:708px;width:17px;height:17px;background:#a0a0a2"></div>
<div class="a" style="left:867px;top:708px;width:17px;height:17px;background:#a4a4a0"></div>
<div class="a" style="left:884px;top:708px;width:17px;height:17px;background:#9c9a9a"></div>
<div class="a" style="left:901px;top:708px;width:17px;height:17px;background:#b8bcc0"></div>
<div class="a" style="left:773px;top:725px;width:9px;height:17px;background:#d0cecc"></div>
<div class="a" style="left:782px;top:725px;width:17px;height:17px;background:#cccece"></div>
<div class="a" style="left:799px;top:725px;width:17px;height:17px;background:#c4c4c4"></div>
<div class="a" style="left:816px;top:725px;width:17px;height:17px;background:#c8c8c6"></div>
<div class="a" style="left:833px;top:725px;width:17px;height:17px;background:#c4c4c4"></div>
<div class="a" style="left:850px;top:725px;width:17px;height:17px;background:#cacaca"></div>
<div class="a" style="left:867px;top:725px;width:17px;height:17px;background:#ccccd0"></div>
<div class="a" style="left:884px;top:725px;width:17px;height:17px;background:#c8c6c4"></div>
<div class="a" style="left:901px;top:725px;width:17px;height:17px;background:#d0d2d6"></div>
<div class="a" style="left:782px;top:742px;width:17px;height:17px;background:#d8d8d8"></div>
<div class="a" style="left:773px;top:759px;width:9px;height:17px;background:#c8bcb4"></div>
<div class="a" style="left:782px;top:759px;width:17px;height:17px;background:#9a9ea2"></div>
<div class="a" style="left:799px;top:759px;width:17px;height:17px;background:#a0a2a0"></div>
<div class="a" style="left:816px;top:759px;width:17px;height:17px;background:#a0a0a0"></div>
<div class="a" style="left:833px;top:759px;width:17px;height:17px;background:#9e9e9e"></div>
<div class="a" style="left:773px;top:776px;width:9px;height:15px;background:#d0d0d0"></div>
<div class="a" style="left:782px;top:776px;width:17px;height:15px;background:#d4d4d4"></div>
<div class="a" style="left:799px;top:776px;width:17px;height:15px;background:#d0d0d0"></div>
<div class="a" style="left:816px;top:776px;width:17px;height:15px;background:#d0d0d0"></div>
<div class="a" style="left:833px;top:776px;width:17px;height:15px;background:#c8cac8"></div>
<div class="a" style="left:55px;top:1564px;width:1342px;height:50px;background:linear-gradient(#dcdcdc 0px,#e6e6e6 4px,#e9e9e9 10px,#ececec 100%)"></div>
<div class="a" style="left:55px;top:1612px;width:1342px;height:2px;background:#f7f7f7"></div>
<svg class="a" style="left:70px;top:1575.5px;overflow:visible" width="18" height="28"><defs><linearGradient id="g400" x1="0" y1="0" x2="0" y2="1"><stop offset="0" stop-color="#1a1a1a"/><stop offset="1" stop-color="#9a9a9a"/></linearGradient></defs><path transform="translate(3 3)" d="M12 0 L0 11.0 L12 22 Z" fill="url(#g400)" stroke="#fff" stroke-opacity="0.7" stroke-width="1.5"/></svg>
<svg class="a" style="left:1362px;top:1575px;overflow:visible" width="18.5" height="29"><defs><linearGradient id="g401" x1="0" y1="0" x2="0" y2="1"><stop offset="0" stop-color="#1a1a1a"/><stop offset="1" stop-color="#9a9a9a"/></linearGradient></defs><path transform="translate(3 3)" d="M0 0 L12.5 11.5 L0 23 Z" fill="url(#g401)" stroke="#fff" stroke-opacity="0.7" stroke-width="1.5"/></svg>
<div class="a" style="left:109px;top:1564px;width:796px;height:49px;border:2px solid #8f8f8f;border-radius:4px;background:linear-gradient(#f3f3f3 0%,#ececec 28%,#d8d8da 30%,#d4d5d7 80%,#c4c5c8 100%);box-shadow:inset 0 0 0 1px #f8f8f8"></div>
<div class="a" style="left:492.5px;top:1576px;width:8px;height:24px;border-radius:1px;background:linear-gradient(90deg,#3a3a3a 0,#4a4a4a 25%,#a8a8a8 45%,#b0b0b0 100%);box-shadow:0 0 0 1px #f2f2f2"></div>
<div class="a" style="left:492.5px;top:1576px;width:8px;height:3px;background:#1e1e1e"></div>
<div class="a" style="left:502.7px;top:1576px;width:8px;height:24px;border-radius:1px;background:linear-gradient(90deg,#3a3a3a 0,#4a4a4a 25%,#a8a8a8 45%,#b0b0b0 100%);box-shadow:0 0 0 1px #f2f2f2"></div>
<div class="a" style="left:502.7px;top:1576px;width:8px;height:3px;background:#1e1e1e"></div>
<div class="a" style="left:512.9px;top:1576px;width:8px;height:24px;border-radius:1px;background:linear-gradient(90deg,#3a3a3a 0,#4a4a4a 25%,#a8a8a8 45%,#b0b0b0 100%);box-shadow:0 0 0 1px #f2f2f2"></div>
<div class="a" style="left:512.9px;top:1576px;width:8px;height:3px;background:#1e1e1e"></div>
<div class="a" style="left:53px;top:1617px;width:1346px;height:4px;background:#f7f7f7"></div>
<div class="cb" style="left:1477px;top:321px;width:605px;height:53px"></div>
<div class="t" style="left:1482.47px;top:333.31px;font-size:32px;line-height:32px;transform:scaleX(0.9866);color:#000;">Prüfungsanlässe</div>
<div class="arr" style="left:2044px;top:343px;border-left-width:11.5px;border-right-width:11.5px"></div>
<div class="cb" style="left:1477px;top:398px;width:605px;height:54px"></div>
<div class="t" style="left:1486.26px;top:410.91px;font-size:32px;line-height:32px;transform:scaleX(0.9921);color:#000;">AA BM2 W1 1. Semester</div>
<div class="arr" style="left:2044px;top:420px;border-left-width:11.5px;border-right-width:11.5px"></div>
<div class="cb" style="left:1478px;top:487px;width:603px;height:62px;border-color:#707070"></div>
<div class="t" style="left:1566.21px;top:503.71px;font-size:32px;line-height:32px;transform:scaleX(1.0104);color:#000;">Zu allen Prüfungen anmelden</div>
<div class="t" style="left:1475.33px;top:590.71px;font-size:32px;line-height:32px;transform:scaleX(1.0417);color:#000;">Prüfung(en):</div>
<div class="a" style="left:1477px;top:633px;width:606px;height:786px;border:2px solid #666;background:#fff"></div>
<div class="a" style="left:1479px;top:653px;width:549px;height:41px;background:linear-gradient(#f6f7f9,#f1f2f4)"></div>
<div class="a" style="left:1479px;top:694px;width:549px;height:2px;background:#dcdddf"></div>
<div class="t" style="left:1486.27px;top:652.76px;font-size:31px;line-height:31px;transform:scaleX(1.0208);color:#000;">Beschreibung</div>
<div class="a" style="left:1479px;top:1360px;width:549px;height:56px;overflow:hidden">
</div>
<div class="a" style="left:1479px;top:696px;width:549px;height:51px;background:#ffffff"></div>
<div class="t" style="left:1483.05px;top:707.76px;font-size:31px;line-height:31px;transform:scaleX(0.9893);color:#000;">Deutsch (ZK1)</div>
<div class="a" style="left:1479px;top:747px;width:549px;height:48px;background:#f4f4f4"></div>
<div class="a" style="left:1479px;top:747px;width:2px;height:48px;background:#fff"></div>
<div class="t" style="left:1483.05px;top:758.23px;font-size:31px;line-height:31px;transform:scaleX(0.9893);color:#000;">Deutsch (ZK2)</div>
<div class="a" style="left:1479px;top:798px;width:549px;height:52px;background:#f2f2f1"></div>
<div class="a" style="left:1481px;top:800px;width:547px;height:48px;background:#72b4ff"></div>
<div class="t" style="left:1483.06px;top:809.71px;font-size:31px;line-height:31px;transform:scaleX(0.9856);color:#fff;">EF Geschichte und Politik (ZK1)</div>
<div class="a" style="left:1479px;top:848px;width:549px;height:53px;background:#f2f2f1"></div>
<div class="a" style="left:1481px;top:850px;width:547px;height:49px;background:#72b4ff"></div>
<div class="t" style="left:1483.06px;top:860.18px;font-size:31px;line-height:31px;transform:scaleX(0.9856);color:#fff;">EF Geschichte und Politik (ZK2)</div>
<div class="a" style="left:1479px;top:901px;width:549px;height:48px;background:#ffffff"></div>
<div class="t" style="left:1483.02px;top:910.66px;font-size:31px;line-height:31px;transform:scaleX(1.0012);color:#000;">EF Technik und Umwelt (ZK1)</div>
<div class="a" style="left:1479px;top:949px;width:549px;height:49px;background:#f4f4f4"></div>
<div class="a" style="left:1479px;top:949px;width:2px;height:49px;background:#fff"></div>
<div class="t" style="left:1483.02px;top:961.13px;font-size:31px;line-height:31px;transform:scaleX(1.0012);color:#000;">EF Technik und Umwelt (ZK2)</div>
<div class="a" style="left:1479px;top:1000px;width:549px;height:53px;background:#f2f2f1"></div>
<div class="a" style="left:1481px;top:1002px;width:547px;height:49px;background:#72b4ff"></div>
<div class="t" style="left:1483.04px;top:1012.61px;font-size:31px;line-height:31px;transform:scaleX(0.9918);color:#fff;">EF Wirtschaft und Recht (ZK1)</div>
<div class="a" style="left:1479px;top:1051px;width:549px;height:53px;background:#f2f2f1"></div>
<div class="a" style="left:1481px;top:1053px;width:547px;height:49px;background:#72b4ff"></div>
<div class="t" style="left:1483.04px;top:1063.08px;font-size:31px;line-height:31px;transform:scaleX(0.9918);color:#fff;">EF Wirtschaft und Recht (ZK2)</div>
<div class="a" style="left:1479px;top:1104px;width:549px;height:48px;background:#ffffff"></div>
<div class="t" style="left:1483.06px;top:1113.56px;font-size:31px;line-height:31px;transform:scaleX(0.9821);color:#000;">Englisch (ZK1)</div>
<div class="a" style="left:1479px;top:1152px;width:549px;height:49px;background:#f4f4f4"></div>
<div class="a" style="left:1479px;top:1152px;width:2px;height:49px;background:#fff"></div>
<div class="t" style="left:1483.06px;top:1164.03px;font-size:31px;line-height:31px;transform:scaleX(0.9821);color:#000;">Englisch (ZK2)</div>
<div class="a" style="left:1479px;top:1203px;width:549px;height:53px;background:#f2f2f1"></div>
<div class="a" style="left:1481px;top:1205px;width:547px;height:49px;background:#72b4ff"></div>
<div class="t" style="left:1483.07px;top:1215.51px;font-size:31px;line-height:31px;transform:scaleX(0.9816);color:#fff;">Französisch (ZK1)</div>
<div class="a" style="left:1479px;top:1256px;width:549px;height:49px;background:#f4f4f4"></div>
<div class="a" style="left:1479px;top:1256px;width:2px;height:49px;background:#fff"></div>
<div class="t" style="left:1483.07px;top:1265.98px;font-size:31px;line-height:31px;transform:scaleX(0.9817);color:#000;">Französisch (ZK2)</div>
<div class="a" style="left:1479px;top:1305px;width:549px;height:50px;background:#ffffff"></div>
<div class="t" style="left:1483.96px;top:1316.46px;font-size:31px;line-height:31px;transform:scaleX(1.0258);color:#000;">Mathematik (ZK1)</div>
<div class="a" style="left:1479px;top:1357px;width:549px;height:8px;background:#f4f4f4"></div>
<div class="a" style="left:2030px;top:635px;width:51px;height:726px;background:linear-gradient(90deg,#e3e3e3 0,#ededed 6px,#efefef 100%)"></div>
<svg class="a" style="left:2043px;top:654.5px;overflow:visible" width="29" height="18"><defs><linearGradient id="g462" x1="0" y1="0" x2="1" y2="1"><stop offset="0" stop-color="#1a1a1a"/><stop offset="1" stop-color="#a0a0a0"/></linearGradient></defs><path transform="translate(3 3)" d="M0 12 L11.5 0 L23 12 Z" fill="url(#g462)" stroke="#fff" stroke-opacity="0.7" stroke-width="1.5"/></svg>
<svg class="a" style="left:2043px;top:1329.5px;overflow:visible" width="29" height="18"><defs><linearGradient id="g463" x1="0" y1="0" x2="1" y2="1"><stop offset="0" stop-color="#1a1a1a"/><stop offset="1" stop-color="#a0a0a0"/></linearGradient></defs><path transform="translate(3 3)" d="M0 0 L23 0 L11.5 12 Z" fill="url(#g463)" stroke="#fff" stroke-opacity="0.7" stroke-width="1.5"/></svg>
<div class="a" style="left:2030px;top:690px;width:49px;height:535px;border:2px solid #8f8f8f;border-radius:4px;background:linear-gradient(90deg,#f3f3f3 0%,#ececec 28%,#d8d8da 30%,#d4d5d7 80%,#c4c5c8 100%);box-shadow:inset 0 0 0 1px #f8f8f8"></div>
<div class="a" style="left:2042px;top:943.0px;width:25px;height:8px;border-radius:1px;background:linear-gradient(#3a3a3a 0,#4a4a4a 25%,#a8a8a8 45%,#b0b0b0 100%);box-shadow:0 0 0 1px #f2f2f2"></div>
<div class="a" style="left:2042px;top:953.2px;width:25px;height:8px;border-radius:1px;background:linear-gradient(#3a3a3a 0,#4a4a4a 25%,#a8a8a8 45%,#b0b0b0 100%);box-shadow:0 0 0 1px #f2f2f2"></div>
<div class="a" style="left:2042px;top:963.4px;width:25px;height:8px;border-radius:1px;background:linear-gradient(#3a3a3a 0,#4a4a4a 25%,#a8a8a8 45%,#b0b0b0 100%);box-shadow:0 0 0 1px #f2f2f2"></div>
<div class="a" style="left:1479px;top:1365px;width:549px;height:51px;background:linear-gradient(#dcdcdc 0px,#e6e6e6 4px,#e9e9e9 10px,#ececec 100%)"></div>
<div class="a" style="left:2028px;top:1360px;width:53px;height:56px;background:#f0f0f0"></div>
<svg class="a" style="left:1494px;top:1376px;overflow:visible" width="18" height="28"><defs><linearGradient id="g470" x1="0" y1="0" x2="0" y2="1"><stop offset="0" stop-color="#1a1a1a"/><stop offset="1" stop-color="#9a9a9a"/></linearGradient></defs><path transform="translate(3 3)" d="M12 0 L0 11.0 L12 22 Z" fill="url(#g470)" stroke="#fff" stroke-opacity="0.7" stroke-width="1.5"/></svg>
<svg class="a" style="left:1992px;top:1376px;overflow:visible" width="19" height="28"><defs><linearGradient id="g471" x1="0" y1="0" x2="0" y2="1"><stop offset="0" stop-color="#1a1a1a"/><stop offset="1" stop-color="#9a9a9a"/></linearGradient></defs><path transform="translate(3 3)" d="M0 0 L13 11.0 L0 22 Z" fill="url(#g471)" stroke="#fff" stroke-opacity="0.7" stroke-width="1.5"/></svg>
<div class="a" style="left:1533px;top:1366px;width:85px;height:48px;border:2px solid #8f8f8f;border-radius:4px;background:linear-gradient(#f3f3f3 0%,#ececec 28%,#d8d8da 30%,#d4d5d7 80%,#c4c5c8 100%);box-shadow:inset 0 0 0 1px #f8f8f8"></div>
<div class="a" style="left:1561.5px;top:1378px;width:8px;height:24px;border-radius:1px;background:linear-gradient(90deg,#3a3a3a 0,#4a4a4a 25%,#a8a8a8 45%,#b0b0b0 100%);box-shadow:0 0 0 1px #f2f2f2"></div>
<div class="a" style="left:1561.5px;top:1378px;width:8px;height:3px;background:#1e1e1e"></div>
<div class="a" style="left:1571.7px;top:1378px;width:8px;height:24px;border-radius:1px;background:linear-gradient(90deg,#3a3a3a 0,#4a4a4a 25%,#a8a8a8 45%,#b0b0b0 100%);box-shadow:0 0 0 1px #f2f2f2"></div>
<div class="a" style="left:1571.7px;top:1378px;width:8px;height:3px;background:#1e1e1e"></div>
<div class="a" style="left:1581.9px;top:1378px;width:8px;height:24px;border-radius:1px;background:linear-gradient(90deg,#3a3a3a 0,#4a4a4a 25%,#a8a8a8 45%,#b0b0b0 100%);box-shadow:0 0 0 1px #f2f2f2"></div>
<div class="a" style="left:1581.9px;top:1378px;width:8px;height:3px;background:#1e1e1e"></div>
<div class="a" style="left:1478px;top:1455px;width:603px;height:62px;border:2px solid #3c7fb1;border-radius:4px;background:linear-gradient(#eaf6fd 0%,#d9f0fc 48%,#bee6fd 50%,#a7d9f5 100%);box-shadow:inset 0 0 0 1px #f4fbff"></div>
<div class="t" style="left:1504.64px;top:1470.91px;font-size:32px;line-height:32px;transform:scaleX(1.0001);color:#000;">Zu ausgewählten Prüfungen anmelden</div>
<div class="t" style="left:1477.73px;top:1567.91px;font-size:32px;line-height:32px;transform:scaleX(1.0021);color:#000;">Angemeldet</div>
<div class="t" style="left:1748.36px;top:1568.91px;font-size:32px;line-height:32px;transform:scaleX(1.0302);color:#000;">0</div>
<svg class="a" style="left:1660px;top:1484px" width="50" height="64"><defs><linearGradient id="cg" x1="0" y1="0" x2="0.6" y2="1"><stop offset="0" stop-color="#fff"/><stop offset="1" stop-color="#e6e6e6"/></linearGradient></defs><path d="M6.4 6.8 L6.4 50.6 L16.2 41.8 L24.4 56.5 L32.6 52.6 L26.5 40.5 L40.8 39.6 Z" fill="url(#cg)" stroke="#161622" stroke-width="1.9" stroke-linejoin="round"/></svg>
<!--RIGHT-->
</body></html>
